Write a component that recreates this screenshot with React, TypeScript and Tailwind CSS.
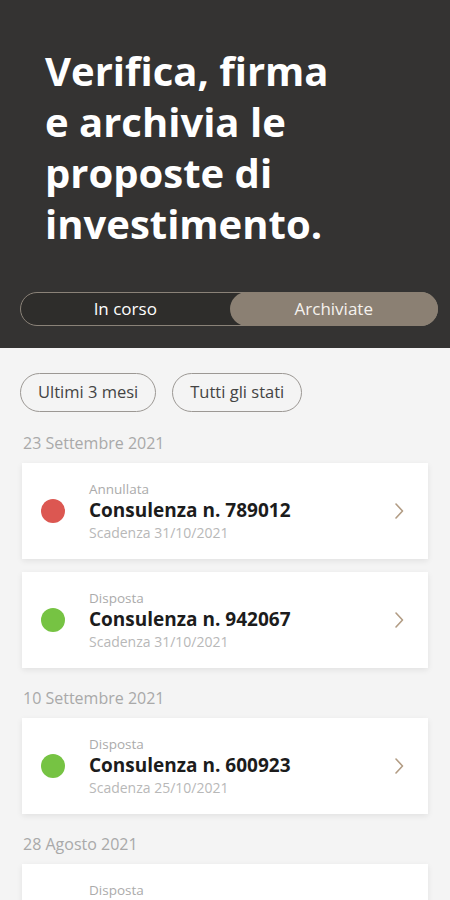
import React from "react";

const font = { fontFamily: '"Open Sans", "Noto Sans", sans-serif' };

type Item = { status: string; color: string; num: string; due: string };
const groups: { date: string; items: Item[] }[] = [
  {
    date: "23 Settembre 2021",
    items: [
      { status: "Annullata", color: "bg-[#dc5751]", num: "789012", due: "31/10/2021" },
      { status: "Disposta", color: "bg-[#76c343]", num: "942067", due: "31/10/2021" },
    ],
  },
  {
    date: "10 Settembre 2021",
    items: [{ status: "Disposta", color: "bg-[#76c343]", num: "600923", due: "25/10/2021" }],
  },
  {
    date: "28 Agosto 2021",
    items: [{ status: "Disposta", color: "bg-[#76c343]", num: "551204", due: "20/10/2021" }],
  },
];

function Chevron() {
  return (
    <svg width="10" height="18" viewBox="0 0 10 18" fill="none">
      <path d="M2 2 L8.5 9 L2 16" stroke="#b29c84" strokeWidth="1.6" strokeLinecap="round" strokeLinejoin="round" />
    </svg>
  );
}

function Card({ item }: { item: Item }) {
  return (
    <div className="flex h-[96px] items-center bg-white pl-[19px] pr-[24px] shadow-[0_2px_6px_rgba(0,0,0,0.08)]">
      <div className={`h-[24px] w-[24px] shrink-0 rounded-full ${item.color}`} />
      <div className="ml-[24px] flex flex-1 flex-col">
        <div className="text-[13.5px] leading-[17px] text-[#ababab]">{item.status}</div>
        <div className="text-[19px] font-bold leading-[25px] text-[#1c1c1c]">Consulenza n. {item.num}</div>
        <div className="text-[14px] leading-[19px] text-[#b8b8b8]">Scadenza {item.due}</div>
      </div>
      <Chevron />
    </div>
  );
}

export default function App() {
  return (
    <div style={font} className="h-[900px] w-[450px] overflow-hidden bg-[#f4f4f4]">
      <div className="bg-[#343332] pb-[22px] pl-[20px] pr-[12px] pt-[45px]">
        <h1 className="pl-[25px] text-[40px] font-bold leading-[51px] text-white">
          Verifica, firma
          <br />e archivia le
          <br />
          proposte di
          <br />
          investimento.
        </h1>
        <div className="mt-[43px] flex h-[34px] rounded-full border border-[#8a8278] bg-[#2e2d2b]">
          <div className="flex flex-1 items-center justify-center text-[17px] text-white">In corso</div>
          <div className="-my-px -mr-px flex flex-1 items-center justify-center rounded-full bg-[#8b8073] text-[17px] text-[#f5f2ee]">
            Archiviate
          </div>
        </div>
      </div>
      <div className="px-[22px] pt-[25px]">
        <div className="-ml-[2px] flex gap-[16px]">
          <div className="flex h-[39px] items-center rounded-full border border-[#9c9894] px-[17px] text-[16.5px] text-[#444]">
            Ultimi 3 mesi
          </div>
          <div className="flex h-[39px] items-center rounded-full border border-[#9c9894] px-[17px] text-[16.5px] text-[#444]">
            Tutti gli stati
          </div>
        </div>
        {groups.map((g, gi) => (
          <div key={gi} className={gi === 0 ? "mt-[21px]" : "mt-[20px]"}>
            <div className="ml-[1px] text-[16px] leading-[20px] text-[#a9a9a9]">{g.date}</div>
            <div className="mt-[10px] flex flex-col gap-[13px]">
              {g.items.map((it, i) => (
                <Card key={i} item={it} />
              ))}
            </div>
          </div>
        ))}
      </div>
    </div>
  );
}
